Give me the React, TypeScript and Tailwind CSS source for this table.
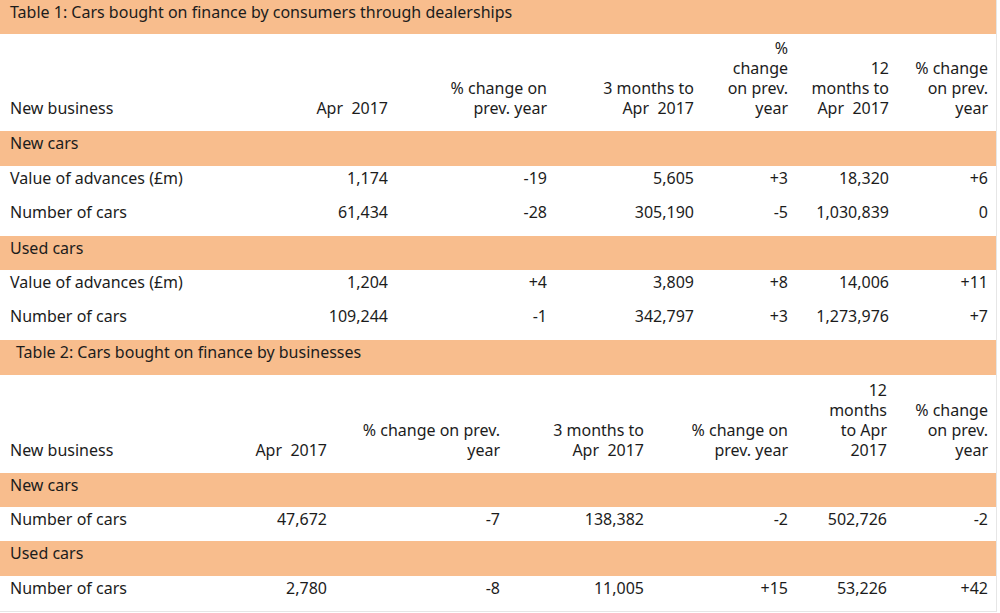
import React from "react";

type Row =
  | { kind: "section"; label: string; h: string }
  | { kind: "data"; cells: string[]; h: string };

interface TableProps {
  title: string;
  titleClass: string;
  titleH: string;
  cols: string;
  header: string[][];
  headerH: string;
  rows: Row[];
}

const A = "Apr\u00a0 2017";

const FinanceTable = ({ title, titleClass, titleH, cols, header, headerH, rows }: TableProps) => {
  return (
    <div className="w-full">
      {/* Title bar */}
      <div className={`bg-[#f8bd8d] pt-[2px] leading-5 ${titleH} ${titleClass}`}>{title}</div>

      {/* Column headings */}
      <div className={`grid ${cols} items-end pb-[13px] ${headerH}`}>
        {header.map((lines, i) => (
          <div key={i} className={i === 0 ? "pl-[10px] leading-5" : "text-right leading-5"}>
            {lines.map((l, j) => (
              <div key={j} className="whitespace-pre">{l}</div>
            ))}
          </div>
        ))}
      </div>

      {rows.map((r, i) =>
        r.kind === "section" ? (
          <div key={i} className={`bg-[#f8bd8d] pl-[10px] pt-[2px] leading-5 ${r.h}`}>
            {r.label}
          </div>
        ) : (
          <div key={i} className={`grid ${cols} pt-[2px] leading-5 ${r.h}`}>
            {r.cells.map((c, j) => (
              <div key={j} className={j === 0 ? "pl-[10px]" : "text-right"}>
                {c}
              </div>
            ))}
          </div>
        )
      )}
    </div>
  );
};

export default function App() {
  return (
    <div className="w-[1000px] h-[613px] bg-white overflow-hidden">
      <div
        className="w-[997px] h-[612px] border-r border-b border-[#e6e6e6] text-[16px] text-[#1c1c1c]"
        style={{ fontFamily: '"Noto Sans", "Open Sans", sans-serif' }}
      >
        <FinanceTable
          title="Table 1: Cars bought on finance by consumers through dealerships"
          titleClass="pl-[10px]"
          titleH="h-[34px]"
          cols="grid-cols-[240px_148px_159px_147px_94px_101px_99px]"
          headerH="h-[97px]"
          header={[
            ["New business"],
            [A],
            ["% change on", "prev. year"],
            ["3 months to", A],
            ["%", "change", "on prev.", "year"],
            ["12", "months to", A],
            ["% change", "on prev.", "year"],
          ]}
          rows={[
            { kind: "section", label: "New cars", h: "h-[35px]" },
            { kind: "data", h: "h-[34px]", cells: ["Value of advances (£m)", "1,174", "-19", "5,605", "+3", "18,320", "+6"] },
            { kind: "data", h: "h-[36px]", cells: ["Number of cars", "61,434", "-28", "305,190", "-5", "1,030,839", "0"] },
            { kind: "section", label: "Used cars", h: "h-[34px]" },
            { kind: "data", h: "h-[34px]", cells: ["Value of advances (£m)", "1,204", "+4", "3,809", "+8", "14,006", "+11"] },
            { kind: "data", h: "h-[36px]", cells: ["Number of cars", "109,244", "-1", "342,797", "+3", "1,273,976", "+7"] },
          ]}
        />
        <FinanceTable
          title="Table 2: Cars bought on finance by businesses"
          titleClass="pl-[16px]"
          titleH="h-[35px]"
          cols="grid-cols-[200px_127px_173px_144px_144px_99px_101px]"
          headerH="h-[98px]"
          header={[
            ["New business"],
            [A],
            ["% change on prev.", "year"],
            ["3 months to", A],
            ["% change on", "prev. year"],
            ["12", "months", "to Apr", "2017"],
            ["% change", "on prev.", "year"],
          ]}
          rows={[
            { kind: "section", label: "New cars", h: "h-[34px]" },
            { kind: "data", h: "h-[34px]", cells: ["Number of cars", "47,672", "-7", "138,382", "-2", "502,726", "-2"] },
            { kind: "section", label: "Used cars", h: "h-[35px]" },
            { kind: "data", h: "h-[35px]", cells: ["Number of cars", "2,780", "-8", "11,005", "+15", "53,226", "+42"] },
          ]}
        />
      </div>
    </div>
  );
}
